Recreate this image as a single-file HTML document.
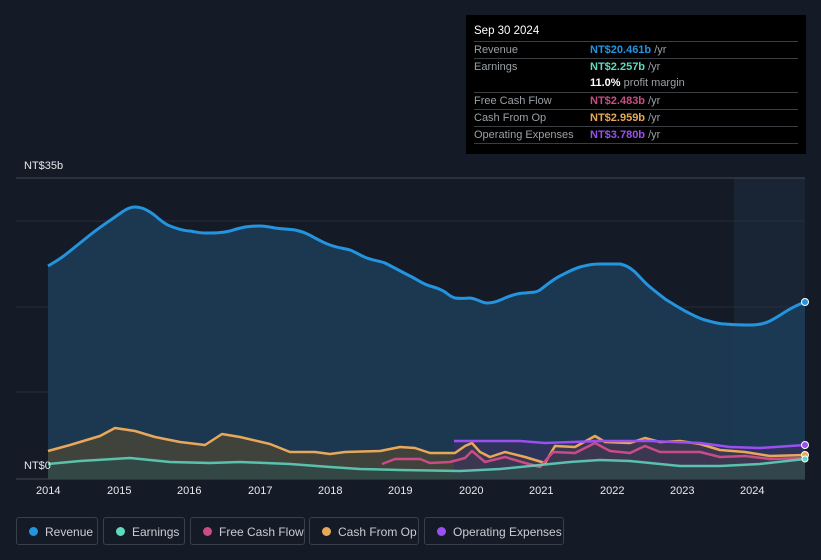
<!DOCTYPE html>
<html><head><meta charset="utf-8"><style>
body{margin:0;background:#151b26;width:821px;height:560px;overflow:hidden;font-family:"Liberation Sans",sans-serif;position:relative}
.tt{position:absolute;left:466px;top:15px;width:340px;height:139px;background:#000;color:#fff;font-size:11px}
.tt .h{position:absolute;left:8px;top:10px;font-size:11.5px}
.row{position:absolute;left:8px;width:324px;border-top:1px solid #3a3d42;height:17px;line-height:17px;color:#9aa0a6}
.row b{position:absolute;left:116px;font-weight:bold}
.row span{color:#9aa0a6;font-weight:normal}
.lg{position:absolute;top:517px;height:28px;border:1px solid #3a404a;border-radius:3px;color:#c9cdd3;font-size:12px;line-height:28px;box-sizing:border-box}
.lg i{position:absolute;left:12px;top:9px;width:9px;height:9px;border-radius:50%}
.lg span{position:absolute;left:28px}
.ax{position:absolute;top:485px;color:#e6e8eb;font-size:11px}
</style></head><body>
<svg width="821" height="560" style="position:absolute;left:0;top:0">
<rect x="734" y="178" width="71" height="301" fill="#1a2838" opacity="0.8"/>
<line x1="16" y1="178" x2="805" y2="178" stroke="#444a54"/>
<line x1="16" y1="221" x2="805" y2="221" stroke="#262d38"/>
<line x1="16" y1="307" x2="805" y2="307" stroke="#262d38"/>
<line x1="16" y1="392" x2="805" y2="392" stroke="#262d38"/>
<line x1="16" y1="479" x2="805" y2="479" stroke="#444a54"/>
<path d="M48,266 C55,262 60,259 65,255 C75,247 80,243 90,235 C100,227 105,224 115,217 C122,212 128,207 135,207 C141,207 145,209 150,212 C158,217 162,223 170,226 C178,229 184,231 190,231 C196,232 200,233 205,233 C215,233 222,233 230,231 C236,229 240,228 245,227 C250,226 255,226 260,226 C265,226 270,227 275,228 C282,229 288,229 295,230 C304,232 308,234 315,238 C321,241 324,243 330,245 C338,248 343,248 350,250 C358,253 362,257 370,259 C376,261 380,261 385,263 C395,268 400,271 410,276 C418,280 423,284 430,286 C437,288 440,289 445,292 C449,295 451,297 455,298 C462,299 466,298 470,298 C478,299 482,303 487,303 C494,303 498,301 505,298 C512,295 518,293 525,293 C532,292 535,293 540,290 C548,284 552,280 560,276 C568,272 573,269 580,267 C588,265 592,264 600,264 C608,264 614,264 620,264 C628,266 630,268 635,272 C641,278 645,283 650,287 C656,292 660,295 665,299 C673,304 678,307 685,311 C693,315 698,318 705,320 C713,322 718,324 725,324 C735,325 742,325 750,325 C758,325 764,324 770,321 C778,317 783,313 790,309 C797,305 800,304 805,302 L805,479 L48,479Z" fill="#1d3d59" opacity="0.85"/>
<path d="M48,266 C55,262 60,259 65,255 C75,247 80,243 90,235 C100,227 105,224 115,217 C122,212 128,207 135,207 C141,207 145,209 150,212 C158,217 162,223 170,226 C178,229 184,231 190,231 C196,232 200,233 205,233 C215,233 222,233 230,231 C236,229 240,228 245,227 C250,226 255,226 260,226 C265,226 270,227 275,228 C282,229 288,229 295,230 C304,232 308,234 315,238 C321,241 324,243 330,245 C338,248 343,248 350,250 C358,253 362,257 370,259 C376,261 380,261 385,263 C395,268 400,271 410,276 C418,280 423,284 430,286 C437,288 440,289 445,292 C449,295 451,297 455,298 C462,299 466,298 470,298 C478,299 482,303 487,303 C494,303 498,301 505,298 C512,295 518,293 525,293 C532,292 535,293 540,290 C548,284 552,280 560,276 C568,272 573,269 580,267 C588,265 592,264 600,264 C608,264 614,264 620,264 C628,266 630,268 635,272 C641,278 645,283 650,287 C656,292 660,295 665,299 C673,304 678,307 685,311 C693,315 698,318 705,320 C713,322 718,324 725,324 C735,325 742,325 750,325 C758,325 764,324 770,321 C778,317 783,313 790,309 C797,305 800,304 805,302" fill="none" stroke="#2394df" stroke-width="3"/>
<polyline points="48,451 70,445 100,436 115,428 135,431 155,437 180,442 205,445 222,434 240,437 270,444 290,452 315,452 330,454 345,452 380,451 400,447 415,448 430,453 455,453 465,446 472,443 480,452 490,457 505,452 525,457 545,463 555,446 575,447 595,436 605,442 630,443 645,438 660,442 680,441 700,444 720,450 745,452 770,456 805,455 805,479 48,479" fill="#4a4636" opacity="0.8" stroke="none"/>
<polyline points="454,441 520,441 545,443 600,441 650,441 700,443 730,447 760,448 805,445 805,479 454,479" fill="#3b3060" opacity="0.6"/>
<polyline points="48,464 80,461 130,458 170,462 210,463 240,462 290,464 330,467 360,469 400,470 460,471 500,469 540,465 570,462 600,460 630,461 660,464 680,466 720,466 760,464 805,459 805,479 48,479" fill="#2e4a4a" opacity="0.7"/>
<polyline points="48,451 70,445 100,436 115,428 135,431 155,437 180,442 205,445 222,434 240,437 270,444 290,452 315,452 330,454 345,452 380,451 400,447 415,448 430,453 455,453 465,446 472,443 480,452 490,457 505,452 525,457 545,463 555,446 575,447 595,436 605,442 630,443 645,438 660,442 680,441 700,444 720,450 745,452 770,456 805,455" fill="none" stroke="#e8a85a" stroke-width="2.5" stroke-linejoin="round"/>
<polyline points="382,464 395,459 420,459 430,463 450,462 465,458 472,451 485,462 505,457 525,463 540,467 553,452 575,453 595,443 610,451 630,453 645,446 660,452 700,452 720,457 745,456 770,459 805,458" fill="none" stroke="#c94c86" stroke-width="2.5" stroke-linejoin="round"/>
<polyline points="48,464 80,461 130,458 170,462 210,463 240,462 290,464 330,467 360,469 400,470 460,471 500,469 540,465 570,462 600,460 630,461 660,464 680,466 720,466 760,464 805,459" fill="none" stroke="#5fd8c0" stroke-width="2.5" stroke-linejoin="round" opacity="0.85"/>
<polyline points="454,441 520,441 545,443 600,441 650,441 700,443 730,447 760,448 805,445" fill="none" stroke="#9b4ff0" stroke-width="2.5"/>
<circle cx="805" cy="302" r="3.5" fill="#2394df" stroke="#fff"/>
<circle cx="805" cy="445" r="3.5" fill="#9b4ff0" stroke="#fff"/>
<circle cx="805" cy="455" r="3.5" fill="#e8a85a" stroke="#fff"/>
<circle cx="805" cy="459" r="3" fill="#5fd8c0" stroke="#fff"/>
</svg>
<div style="position:absolute;left:24px;top:160px;color:#e6e8eb;font-size:11px">NT$35b</div>
<div style="position:absolute;left:24px;top:460px;color:#e6e8eb;font-size:11px">NT$0</div>
<div class="ax" style="left:36px">2014</div><div class="ax" style="left:107px">2015</div><div class="ax" style="left:177px">2016</div><div class="ax" style="left:248px">2017</div><div class="ax" style="left:318px">2018</div><div class="ax" style="left:388px">2019</div><div class="ax" style="left:459px">2020</div><div class="ax" style="left:529px">2021</div><div class="ax" style="left:600px">2022</div><div class="ax" style="left:670px">2023</div><div class="ax" style="left:740px">2024</div>
<div class="tt">
<div class="h">Sep 30 2024</div>
<div class="row" style="top:26px">Revenue<b style="color:#2394df">NT$20.461b <span>/yr</span></b></div>
<div class="row" style="top:43px">Earnings<b style="color:#5fd8c0">NT$2.257b <span>/yr</span></b></div>
<div class="row" style="top:60px;border:none"><b style="color:#fff">11.0% <span>profit margin</span></b></div>
<div class="row" style="top:77px">Free Cash Flow<b style="color:#c94c86">NT$2.483b <span>/yr</span></b></div>
<div class="row" style="top:94px">Cash From Op<b style="color:#e8a85a">NT$2.959b <span>/yr</span></b></div>
<div class="row" style="top:111px">Operating Expenses<b style="color:#9b4ff0">NT$3.780b <span>/yr</span></b></div>
<div class="row" style="top:128px;height:0"></div>
</div>
<div class="lg" style="left:16px;width:82px"><i style="background:#2394df"></i><span>Revenue</span></div>
<div class="lg" style="left:103px;width:82px"><i style="background:#5fd8c0"></i><span>Earnings</span></div>
<div class="lg" style="left:190px;width:115px"><i style="background:#c94c86"></i><span>Free Cash Flow</span></div>
<div class="lg" style="left:309px;width:110px"><i style="background:#e8a85a"></i><span>Cash From Op</span></div>
<div class="lg" style="left:424px;width:140px"><i style="background:#9b4ff0"></i><span>Operating Expenses</span></div>
</body></html>
